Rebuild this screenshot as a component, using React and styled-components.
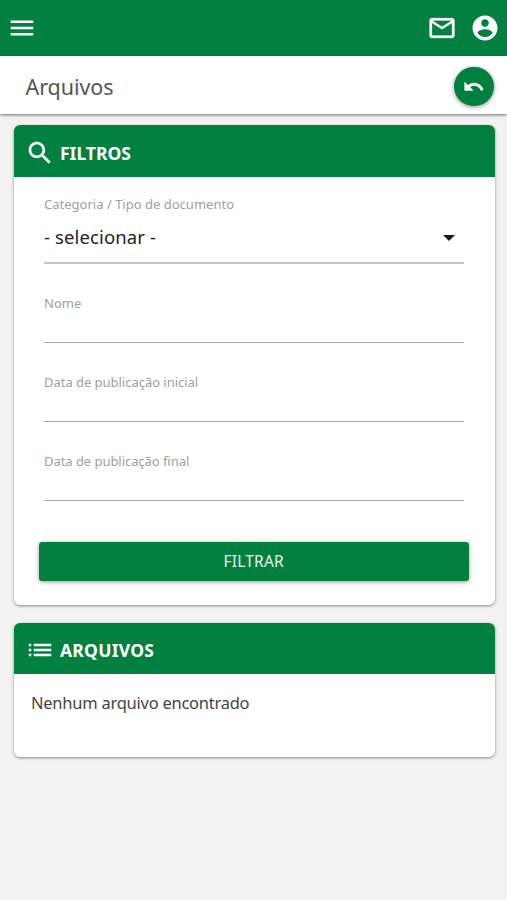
import React from 'react';
import styled, { createGlobalStyle } from 'styled-components';

const GREEN = '#02803f';

const GlobalStyle = createGlobalStyle`
  *, *::before, *::after { box-sizing: border-box; }
  body {
    margin: 0;
    background: #f2f2f2;
    font-family: 'Noto Sans', 'Open Sans', sans-serif;
    color: #3c3c3c;
  }
`;

const Page = styled.div`
  height: 900px;
  overflow: hidden;
  background: #f2f2f2;
`;

const TopBar = styled.header`
  display: flex;
  align-items: center;
  height: 56px;
  padding: 0 7.3px 0 6.5px;
  background: ${GREEN};
  color: #fff;
`;

const IconButton = styled.button`
  display: flex;
  padding: 0;
  border: 0;
  background: none;
  color: inherit;
`;

const Actions = styled.div`
  display: flex;
  gap: 12.5px;
  margin-left: auto;
`;

const Icon = styled.svg`
  display: block;
  flex: none;
  width: ${({ $size }) => $size}px;
  height: ${({ $size }) => $size}px;
  fill: currentColor;
  stroke: currentColor;
  stroke-width: ${({ $weight }) => $weight};
`;

const Label = styled.span`
  display: block;
  white-space: nowrap;
  font-size: ${({ $size }) => $size}px;
  letter-spacing: ${({ $track }) => $track || 0}px;
`;

const TitleBar = styled.div`
  position: relative;
  display: flex;
  align-items: center;
  justify-content: space-between;
  height: 58px;
  padding: 3px 13.4px 0 25.5px;
  background: #fff;
  box-shadow: 0 1px 3px rgba(0, 0, 0, 0.55);
`;

const Title = styled.h1`
  margin: 0;
  font-weight: 400;
  line-height: 30px;
  color: #555;
`;

const BackButton = styled.button`
  display: flex;
  align-items: center;
  justify-content: center;
  width: 39.4px;
  height: 39.4px;
  padding: 0;
  border: 0;
  border-radius: 50%;
  background: ${GREEN};
  color: #fff;
  box-shadow: 0 1px 4px rgba(0, 0, 0, 0.45);
`;

const Main = styled.main`
  display: flex;
  flex-direction: column;
  gap: 17.5px;
  padding: 11.4px 12.5px 0 14px;
`;

const Card = styled.section`
  height: ${({ $height }) => $height}px;
  border-radius: 6px;
  background: #fff;
  box-shadow: 0 1px 3px rgba(0, 0, 0, 0.45);
`;

const CardHeader = styled.h2`
  display: flex;
  align-items: center;
  gap: 5px;
  height: 51.3px;
  margin: 0;
  padding: 3px 11px 0;
  border-radius: 6px 6px 0 0;
  background: ${GREEN};
  color: #fff;
  font-weight: 700;
`;

const Form = styled.form`
  padding: 16px 26px 0 25px;
`;

const Field = styled.div`
  height: ${({ $height }) => $height}px;
  margin: 0 5px;
`;

const FieldLabel = styled.label`
  display: block;
  height: 22px;
  line-height: 22px;
  color: #a0a0a0;
`;

const Control = styled.div`
  display: flex;
  align-items: center;
  justify-content: space-between;
  height: ${({ $height }) => $height}px;
  padding: 0 9px ${({ $lift }) => $lift || 0}px 0;
  border-bottom: ${({ $line }) => $line};
  color: #222;
`;

const Caret = styled.span`
  margin-top: 4px;
  border: 6px solid transparent;
  border-top-color: #1a1a1a;
  border-bottom: 0;
`;

const Submit = styled.button`
  display: flex;
  align-items: center;
  justify-content: center;
  width: 100%;
  height: 39px;
  margin-top: 12.2px;
  padding: 0 0 1px;
  border: 0;
  border-radius: 3px;
  background: ${GREEN};
  color: #e9f5ee;
  font-family: inherit;
  box-shadow: 0 1px 4px rgba(0, 0, 0, 0.4);
`;

const Message = styled.p`
  margin: 0;
  padding: 17px 17px;
  line-height: 24px;
  color: #444;
`;

const PATHS = {
  menu: 'M3 18h18v-2H3v2zm0-5h18v-2H3v2zm0-7v2h18V6H3z',
  mail: 'M20 4H4c-1.1 0-1.99.9-1.99 2L2 18c0 1.1.9 2 2 2h16c1.1 0 2-.9 2-2V6c0-1.1-.9-2-2-2zm0 14H4V8l8 5 8-5v10zm-8-7L4 6h16l-8 5z',
  account: 'M12 2C6.48 2 2 6.48 2 12s4.48 10 10 10 10-4.48 10-10S17.52 2 12 2zm0 3c1.66 0 3 1.34 3 3s-1.34 3-3 3-3-1.34-3-3 1.34-3 3-3zm0 14.2c-2.5 0-4.71-1.28-6-3.22.03-1.99 4-3.08 6-3.08 1.99 0 5.97 1.09 6 3.08-1.29 1.94-3.5 3.22-6 3.22z',
  undo: 'M12.5 8c-2.65 0-5.05.99-6.9 2.6L2 7v9h9l-3.62-3.62c1.39-1.16 3.16-1.88 5.12-1.88 3.54 0 6.55 2.31 7.6 5.5l2.37-.78C21.08 11.03 17.15 8 12.5 8z',
  search: 'M15.5 14h-.79l-.28-.27C15.41 12.59 16 11.11 16 9.5 16 5.91 13.09 3 9.5 3S3 5.91 3 9.5 5.91 16 9.5 16c1.61 0 3.09-.59 4.23-1.57l.27.28v.79l5 4.99L20.49 19l-4.99-5zm-6 0C7.01 14 5 11.99 5 9.5S7.01 5 9.5 5 14 7.01 14 9.5 11.99 14 9.5 14z',
  list: 'M3 13h2v-2H3v2zm0 4h2v-2H3v2zm0-8h2V7H3v2zm4 4h14v-2H7v2zm0 4h14v-2H7v2zM7 7v2h14V7H7z',
};

const Glyph = ({ name, size = 30, weight = 0 }) => (
  <Icon viewBox="0 0 24 24" $size={size} $weight={weight} aria-hidden="true">
    <path d={PATHS[name]} />
  </Icon>
);

const TextField = ({ label, track }) => (
  <Field $height={79.4}>
    <FieldLabel><Label $size={13} $track={track}>{label}</Label></FieldLabel>
    <Control $height={29} $line="1px solid #a8a8a8" />
  </Field>
);

export default function App() {
  return (
    <Page>
      <GlobalStyle />
      <TopBar>
        <IconButton aria-label="Menu"><Glyph name="menu" /></IconButton>
        <Actions>
          <IconButton aria-label="Mensagens"><Glyph name="mail" weight={0.2} /></IconButton>
          <IconButton aria-label="Conta"><Glyph name="account" /></IconButton>
        </Actions>
      </TopBar>
      <TitleBar>
        <Title><Label $size={21.5} $track={-0.05}>Arquivos</Label></Title>
        <BackButton aria-label="Voltar"><Glyph name="undo" size={21.5} weight={0.8} /></BackButton>
      </TitleBar>
      <Main>
        <Card $height={480}>
          <CardHeader>
            <Glyph name="search" weight={0.2} />
            <Label $size={17.5} $track={0}>FILTROS</Label>
          </CardHeader>
          <Form>
            <Field $height={99}>
              <FieldLabel><Label $size={13} $track={0.01}>Categoria / Tipo de documento</Label></FieldLabel>
              <Control $height={49} $lift={4} $line="2px solid #c8c8c8">
                <Label $size={18.5} $track={0.12}>- selecionar -</Label>
                <Caret />
              </Control>
            </Field>
            <TextField label="Nome" track={0} />
            <TextField label="Data de publicação inicial" track={-0.03} />
            <TextField label="Data de publicação final" track={-0.05} />
            <Submit type="button"><Label $size={15.5} $track={0.2}>FILTRAR</Label></Submit>
          </Form>
        </Card>
        <Card $height={134}>
          <CardHeader>
            <Glyph name="list" />
            <Label $size={17.5} $track={0.25}>ARQUIVOS</Label>
          </CardHeader>
          <Message><Label $size={16.5} $track={-0.25}>Nenhum arquivo encontrado</Label></Message>
        </Card>
      </Main>
    </Page>
  );
}
